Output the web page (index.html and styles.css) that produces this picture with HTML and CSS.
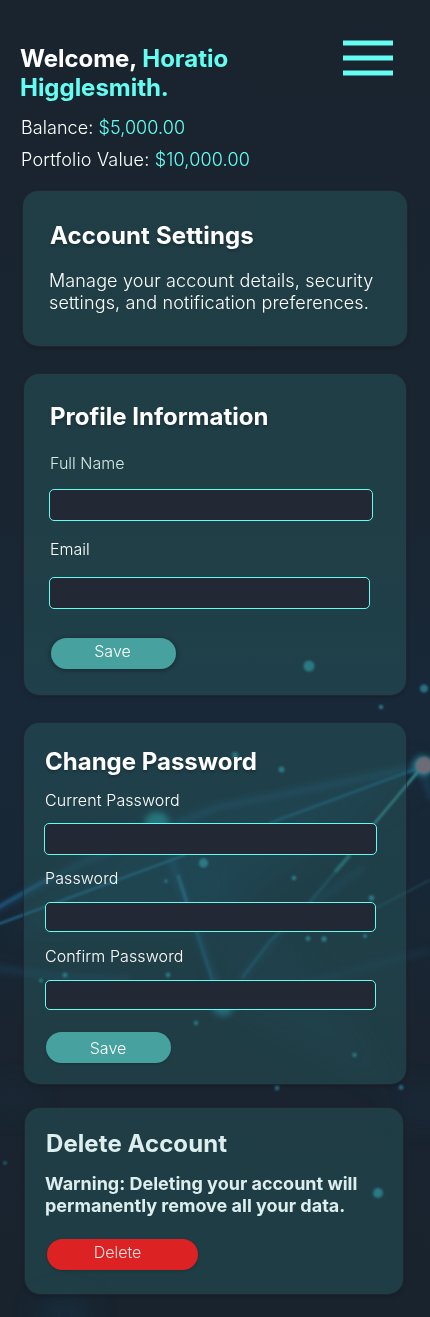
FILE: index.html
```html
<!DOCTYPE html>
<html lang="en">
<head>
<meta charset="utf-8">
<title>Account Settings</title>
<link rel="stylesheet" href="styles.css">
</head>
<body>
<div class="page">
  <svg class="backdrop" viewBox="0 0 430 1317" aria-hidden="true">
    <defs>
      <linearGradient id="base" x1="0" y1="0" x2="0" y2="1">
        <stop offset="0" stop-color="#19242f"/>
        <stop offset=".38" stop-color="#192531"/>
        <stop offset=".53" stop-color="#182838"/>
        <stop offset=".68" stop-color="#182735"/>
        <stop offset=".78" stop-color="#192430"/>
        <stop offset="1" stop-color="#18232e"/>
      </linearGradient>
      <filter id="soft1" x="-50%" y="-50%" width="200%" height="200%" color-interpolation-filters="sRGB"><feGaussianBlur stdDeviation="1"/></filter>
      <filter id="soft3" x="-50%" y="-50%" width="200%" height="200%" color-interpolation-filters="sRGB"><feGaussianBlur stdDeviation="3"/></filter>
      <filter id="soft12" x="-50%" y="-50%" width="200%" height="200%" color-interpolation-filters="sRGB"><feGaussianBlur stdDeviation="14"/></filter>
    </defs>
    <rect width="430" height="1317" fill="url(#base)"/>
    <g filter="url(#soft12)" fill="#1b4a68">
      <path d="M430 766L130 830L10 930L200 925Z" opacity=".3"/>
      <path d="M160 820L240 1010L400 1090L300 960Z" opacity=".14"/>
      <ellipse cx="65" cy="1315" rx="26" ry="14" opacity=".35"/>
      <ellipse cx="424" cy="1105" rx="28" ry="16" opacity=".14"/>
      <ellipse cx="12" cy="1098" rx="26" ry="14" opacity=".1"/>
    </g>
    <g filter="url(#soft3)" stroke="#1f5a80" fill="none">
      <path d="M424 766L215 808L80 864L-5 910" stroke-width="5" opacity=".5"/>
      <path d="M-5 968L60 977L130 980" stroke-width="7" opacity=".3"/>
      <path d="M365 867L300 912L240 980" stroke-width="5" opacity=".3"/>
      <path d="M170 856L224 1006" stroke-width="6" opacity=".45"/>
      <path d="M424 775L432 800" stroke-width="4" opacity=".6"/>
      <path d="M300 985L430 950" stroke-width="6" opacity=".2"/>
    </g>
    <g filter="url(#soft1)" fill="none">
      <path d="M424 766L270 823" stroke="#1f6689" stroke-width="2.5" opacity=".75"/>
      <path d="M185 855L-4 925" stroke="#226f94" stroke-width="2" opacity=".9"/>
      <path d="M55 875L-5 909" stroke="#1f6090" stroke-width="4" opacity=".6"/>
      <path d="M421 768L374 824" stroke="#3a8f94" stroke-width="2.5"/>
      <path d="M350 855L335 872" stroke="#2b8f92" stroke-width="3.5" opacity=".8"/>
      <path d="M337 870L310 902L270 941L242 978" stroke="#226a88" stroke-width="3" opacity=".45"/>
      <path d="M178 875L187 903" stroke="#2a7fa0" stroke-width="3" opacity=".7"/>
      <path d="M196 930L214 985" stroke="#22708f" stroke-width="2.5" opacity=".5"/>
      <path d="M376 908L430 880" stroke="#226d80" stroke-width="1.5" opacity=".45"/>
    </g>
    <g filter="url(#soft3)">
      <ellipse cx="157" cy="822" rx="12" ry="10" fill="#26909a" opacity=".9"/>
      <circle cx="223" cy="1005" r="11" fill="#2480a0" opacity=".85"/>
      <circle cx="423" cy="766" r="10" fill="#248293"/>
    </g>
    <g filter="url(#soft1)">
      <circle cx="424" cy="765.500" r="8.500" fill="#6a6c78"/>
      <circle cx="309" cy="666" r="5.500" fill="#2a8b9b"/>
      <circle cx="424" cy="688.500" r="4" fill="#287082"/>
      <circle cx="381" cy="707" r="2.200" fill="#2c7888"/>
      <circle cx="235" cy="755" r="3.200" fill="#267c8a"/>
      <circle cx="281.500" cy="769.500" r="3" fill="#2a8b9b"/>
      <circle cx="203.500" cy="863" r="4.700" fill="#2a8b9b"/>
      <circle cx="166" cy="881" r="1.800" fill="#28909a"/>
      <circle cx="294" cy="878" r="2.200" fill="#2a99a8"/>
      <circle cx="371.500" cy="898" r="2.800" fill="#2a8b9b"/>
      <circle cx="308" cy="938.500" r="2.400" fill="#2a8b9b"/>
      <circle cx="324" cy="939" r="2.700" fill="#2a8f9f"/>
      <circle cx="365" cy="936" r="2" fill="#2a8b9b"/>
      <circle cx="65" cy="975" r="2.500" fill="#2a8b9b"/>
      <circle cx="41" cy="980.500" r="2" fill="#2a8b9b"/>
      <circle cx="168" cy="975" r="2.400" fill="#2a8b9b"/>
      <circle cx="196" cy="1023" r="2.200" fill="#2a8b9b"/>
      <circle cx="354.500" cy="1055" r="2.200" fill="#2a8b9b"/>
      <circle cx="277" cy="1088" r="2.400" fill="#266a80"/>
      <circle cx="401" cy="1087.500" r="2.400" fill="#266a80"/>
      <circle cx="5" cy="1163" r="1.800" fill="#266a7a"/>
      <circle cx="378" cy="1193" r="5" fill="#2a8b9b"/>
    </g>
  </svg>

  <header class="header">
    <div class="intro">
      <h1 class="title">Welcome, <span class="accent">Horatio<br>Higglesmith.</span></h1>
      <p class="stat">Balance: <span class="accent">$5,000.00</span></p>
      <p class="stat stat-portfolio">Portfolio Value: <span class="accent">$10,000.00</span></p>
    </div>
    <svg class="menu" viewBox="0 0 50 36" role="img" aria-label="Menu">
      <path d="M0 3H50M0 18H50M0 33H50" stroke="#64fdf1" stroke-width="5"/>
    </svg>
  </header>

  <section class="card card-intro">
    <h2 class="title shaded">Account Settings</h2>
    <p class="copy">Manage your account details, security settings, and notification preferences.</p>
  </section>

  <form class="card card-profile">
    <h2 class="title shaded">Profile Information</h2>
    <label class="label muted" for="name">Full Name</label>
    <input class="field" id="name" type="text">
    <label class="label" for="email">Email</label>
    <input class="field field-email" id="email" type="email">
    <button class="button raised" type="button">Save</button>
  </form>

  <form class="card card-password">
    <h2 class="title shaded">Change Password</h2>
    <label class="label" for="current">Current Password</label>
    <input class="field field-current" id="current" type="password">
    <label class="label" for="next">Password</label>
    <input class="field" id="next" type="password">
    <label class="label" for="confirm">Confirm Password</label>
    <input class="field" id="confirm" type="password">
    <button class="button" type="button">Save</button>
  </form>

  <section class="card card-delete">
    <h2 class="title">Delete Account</h2>
    <p class="warning">Warning: Deleting your account will permanently remove all your data.</p>
    <button class="button danger" type="button">Delete</button>
  </section>
</div>
</body>
</html>
```
FILE: styles.css
```css
* { box-sizing: border-box; }

body {
  margin: 0;
  background: #19242f;
  color: #fff;
  font-family: Inter, "Liberation Sans", sans-serif;
}

.page {
  position: relative;
  width: 430px;
  height: 1317px;
  overflow: hidden;
}

.backdrop {
  position: absolute;
  inset: 0;
  width: 430px;
  height: 1317px;
  z-index: -1;
}

.header {
  display: flex;
  justify-content: space-between;
  height: 191px;
  padding: 44px 37px 0 20px;
}

.intro { width: 260px; }

.menu {
  width: 50px;
  height: 36px;
  margin-top: -4px;
}

.title {
  margin: 0;
  font-size: 24px;
  line-height: 29px;
  font-weight: 700;
}

.header .title { letter-spacing: -.03px; }

.shaded { text-shadow: 0 2px 3px rgba(0, 0, 0, .25); }

.accent { color: #64fdf1; }

.stat {
  margin: 10px 0 0 1px;
  font-size: 18px;
  line-height: 22px;
  font-weight: 300;
  letter-spacing: .07px;
}

.stat-portfolio { letter-spacing: .18px; }

.title + .stat { margin-top: 15px; }

.card {
  display: flex;
  flex-direction: column;
  align-items: flex-start;
  margin: 0 24px 0 24px;
  border-radius: 15px;
  background: rgba(43, 98, 101, .42);
  box-shadow: 0 0 0 1px rgba(38, 40, 52, .65), 0 2px 4px rgba(0, 0, 0, .2);
}

.card-intro {
  height: 155px;
  margin: 0 23px 28px;
  padding: 30px 10px 0 26px;
}

.card-intro .title { margin-left: 1px; letter-spacing: .15px; }

.copy, .warning {
  margin: 20px 0 0;
  font-size: 18px;
  line-height: 22px;
  font-weight: 300;
}

.copy { width: 335px; letter-spacing: .14px; }

.card-profile {
  height: 321px;
  margin-bottom: 28px;
  padding: 28px 0 0 25px;
}

.card-profile .title, .card-profile .label { margin-left: 1px; }

.label {
  font-size: 16px;
  line-height: 19px;
  font-weight: 300;
}

.card-password .label { letter-spacing: .1px; }

.muted { color: #d4e8e6; }

.field {
  display: block;
  margin: 0;
  padding: 0 10px;
  border: 1px solid #64fdf1;
  border-radius: 5px;
  background: #222834;
  color: #fff;
  font: 300 16px Inter, sans-serif;
  outline: none;
}

.card-profile .label { margin-top: 23px; }
.card-profile .field { width: 324px; height: 32px; margin-top: 16px; }
.card-profile .field + .label { margin-top: 19px; }
.card-profile .field-email { width: 321px; margin-top: 18px; }

.button {
  width: 125px;
  height: 31px;
  padding: 0;
  border: 0;
  border-radius: 16px;
  background: #47a29f;
  color: #fff;
  font: 300 16px/19px Inter, sans-serif;
  box-shadow: 0 1px 3px rgba(0, 0, 0, .2);
}

.raised {
  margin: 29px 0 0 2px;
  padding: 0 2px 4px 0;
  box-shadow: 0 1px 4px 1px rgba(20, 20, 35, .45);
}

.card-password {
  height: 361px;
  margin-bottom: 24px;
  padding: 24px 0 0 21px;
}

.card-password .label { margin-top: 15px; }
.card-password .field { width: 331px; height: 30px; margin-top: 14px; }
.card-password .field + .label { margin-top: 15px; }
.card-password .field-current { width: 333px; height: 32px; margin: 13px 0 0 -1px; }
.card-password .field-current + .label { margin-top: 14px; }
.card-password .button { margin: 22px 0 0 1px; padding: 2px 1px 0 0; }

.card-delete {
  height: 186px;
  margin: 0 27px 0 25px;
  padding: 21px 0 0 20px;
  color: #dceeed;
}

.card-delete .title { margin-left: 1px; letter-spacing: .08px; }

.warning {
  width: 325px;
  margin-top: 15px;
  font-weight: 700;
}

.card-delete .danger {
  width: 151px;
  margin: 22px 0 0 2px;
  padding: 0 10px 4px 0;
  background: #dc2222;
  color: #f3dcdc;
}
```
